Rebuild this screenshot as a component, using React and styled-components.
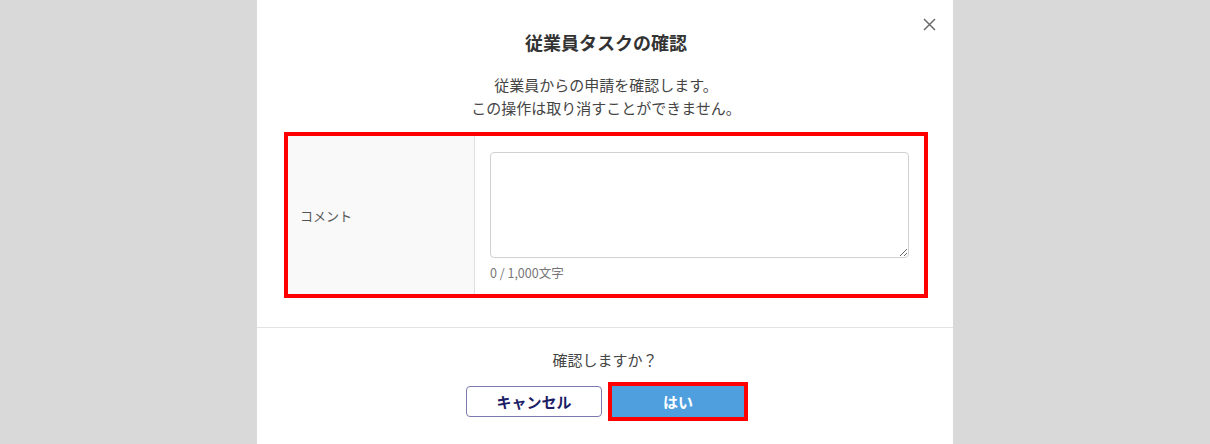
import React, { useState } from 'react';
import styled, { createGlobalStyle } from 'styled-components';

const GlobalStyle = createGlobalStyle`
  body {
    margin: 0;
    background: #d9d9d9;
    font-family: "Noto Sans CJK JP", "Noto Sans", sans-serif;
    color: #333;
  }
`;

const Page = styled.div`
  display: flex;
  justify-content: center;
  min-height: 444px;
`;

const Modal = styled.div`
  position: relative;
  width: 696px;
  min-height: 444px;
  background: #fff;
`;

const CloseButton = styled.button`
  position: absolute;
  top: 16px;
  right: 16px;
  width: 16px;
  height: 16px;
  padding: 0;
  border: none;
  background: none;
  cursor: pointer;
  display: flex;
  align-items: center;
  justify-content: center;
`;

const Body = styled.div`
  padding: 29px 29px 33px 31px;
  border-bottom: 1px solid #e3e3e3;
`;

const Title = styled.h2`
  margin: 0;
  font-size: 18px;
  line-height: 26px;
  font-weight: 700;
  text-align: center;
  color: #333;
`;

const Description = styled.p`
  margin: 18px 0 0;
  font-size: 15px;
  line-height: 23px;
  text-align: center;
  color: #444;
`;

const FormTable = styled.div`
  display: grid;
  grid-template-columns: 187px 1fr;
  margin-top: 17px;
  outline: 4px solid #ff0000;
`;

const LabelCell = styled.div`
  display: flex;
  align-items: center;
  padding: 0 12px;
  background: #f9f9f9;
  border-right: 1px solid #e0e0e0;
  font-size: 13px;
  color: #555;
`;

const ValueCell = styled.div`
  padding: 16px 15px 12px 15px;
`;

const TextArea = styled.textarea`
  display: block;
  box-sizing: border-box;
  width: 100%;
  height: 106px;
  border: 1px solid #d0d0d0;
  border-radius: 4px;
  resize: vertical;
  font-family: inherit;
  font-size: 13px;
  padding: 6px 8px;
  outline: none;
`;

const Counter = styled.div`
  margin-top: 6px;
  font-size: 12.5px;
  line-height: 18px;
  color: #777;
`;

const Footer = styled.div`
  padding-top: 20px;
  display: flex;
  flex-direction: column;
  align-items: center;
`;

const Question = styled.p`
  margin: 0;
  font-size: 15px;
  line-height: 23px;
  color: #444;
`;

const Buttons = styled.div`
  display: flex;
  gap: 10px;
  margin-top: 15px;
`;

const Button = styled.button`
  box-sizing: border-box;
  width: ${p => (p.$primary ? '132px' : '136px')};
  height: 31px;
  border-radius: ${p => (p.$primary ? '0' : '4px')};
  border: ${p => (p.$primary ? 'none' : '1.5px solid #7c79ad')};
  background: ${p => (p.$primary ? '#4f9fdf' : '#fff')};
  color: ${p => (p.$primary ? '#fff' : '#1b1d66')};
  outline: ${p => (p.$primary ? '4px solid #ff0000' : 'none')};
  outline-offset: 0;
  font-family: inherit;
  font-size: 15px;
  font-weight: 700;
  cursor: pointer;
`;

export default function App() {
  const [comment, setComment] = useState('');

  return (
    <>
      <GlobalStyle />
      <Page>
        <Modal>
          <CloseButton aria-label="閉じる">
            <svg width="13" height="13" viewBox="0 0 13 13">
              <path d="M1 1 L12 12 M12 1 L1 12" stroke="#6b6b6b" strokeWidth="1.5" />
            </svg>
          </CloseButton>
          <Body>
            <Title>従業員タスクの確認</Title>
            <Description>
              従業員からの申請を確認します。
              <br />
              この操作は取り消すことができません。
            </Description>
            <FormTable>
              <LabelCell>コメント</LabelCell>
              <ValueCell>
                <TextArea
                  value={comment}
                  maxLength={1000}
                  onChange={e => setComment(e.target.value)}
                />
                <Counter>{comment.length} / 1,000文字</Counter>
              </ValueCell>
            </FormTable>
          </Body>
          <Footer>
            <Question>確認しますか？</Question>
            <Buttons>
              <Button>キャンセル</Button>
              <Button $primary>はい</Button>
            </Buttons>
          </Footer>
        </Modal>
      </Page>
    </>
  );
}
